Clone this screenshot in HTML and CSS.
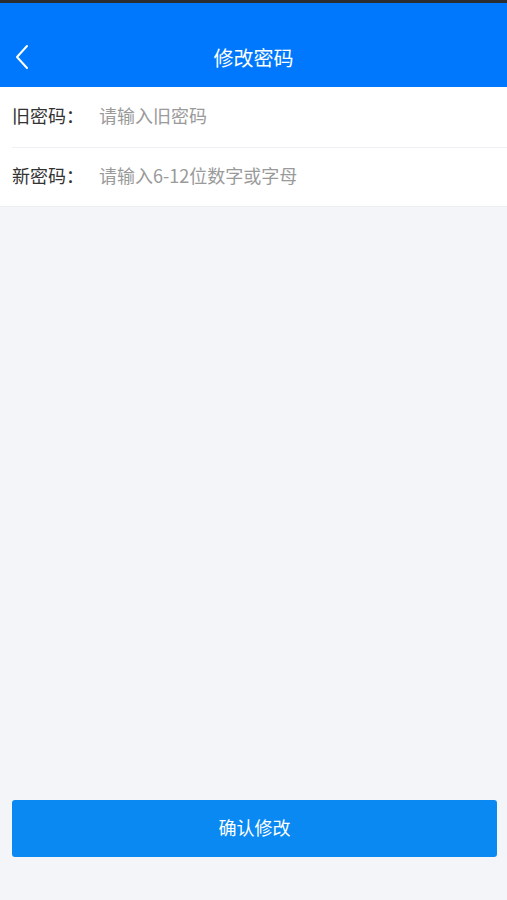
FILE: index.html
```html
<!DOCTYPE html>
<html lang="zh">
<head>
<meta charset="utf-8">
<link rel="stylesheet" href="styles.css">
</head>
<body>
<div class="page">
  <div class="statusbar"></div>
  <header class="navbar">
    <span class="back">
      <svg width="14" height="26" viewBox="0 0 14 26"><path d="M12 2 L2 13 L12 24" fill="none" stroke="#fff" stroke-width="2" stroke-linecap="round" stroke-linejoin="round"/></svg>
    </span>
    <h1 class="title">修改密码</h1>
  </header>
  <div class="form">
    <div class="row">
      <span class="label">旧密码：</span>
      <span class="placeholder">请输入旧密码</span>
    </div>
    <div class="row">
      <span class="label">新密码：</span>
      <span class="placeholder">请输入6-12位数字或字母</span>
    </div>
  </div>
  <div class="spacer"></div>
  <div class="footer">
    <button class="submit">确认修改</button>
  </div>
</div>
</body>
</html>
```
FILE: styles.css
```css
* { box-sizing: border-box; }
html, body { margin: 0; padding: 0; }
body {
  font-family: "Noto Sans CJK SC", "Noto Sans", sans-serif;
  background: #f3f5f9;
}
.page {
  height: 900px;
  display: flex;
  flex-direction: column;
}
.statusbar {
  height: 3px;
  background: #2a2e33;
}
.navbar {
  height: 84px;
  background: #0078fd;
  position: relative;
  display: flex;
  align-items: flex-end;
  justify-content: center;
  padding-bottom: 15px;
}
.back {
  position: absolute;
  left: 15px;
  bottom: 17px;
  display: flex;
}
.title {
  margin: 0;
  font-size: 20px;
  font-weight: 400;
  color: #fff;
  line-height: 28px;
}
.form {
  background: #fff;
  border-bottom: 1px solid #eceef2;
}
.row {
  height: 60px;
  display: flex;
  align-items: center;
  padding-left: 12px;
  padding-bottom: 4px;
  font-size: 18px;
}
.row + .row {
  border-top: 1px solid #eef0f3;
  margin-left: 12px;
  padding-left: 0;
  height: 59px;
}
.label {
  color: #333;
  width: 87px;
}
.placeholder {
  color: #9a9a9a;
}
.spacer { flex: 1; }
.footer {
  padding: 0 10px 43px 12px;
}
.submit {
  width: 100%;
  height: 57px;
  border: none;
  border-radius: 3px;
  background: #0a89f2;
  color: #fff;
  font-family: inherit;
  font-size: 18px;
  padding: 0 0 4px;
}
```
